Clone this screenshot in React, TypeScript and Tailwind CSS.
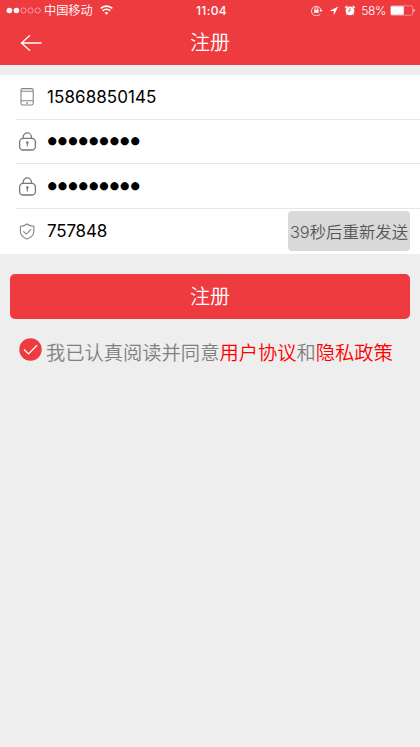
import { useState } from "react";
import type { ReactNode } from "react";

function StatusBar() {
  return (
    <div className="grid h-[21px] grid-cols-[1fr_auto_1fr] items-center pl-[6px] pr-[5px] text-[12px] leading-5">
      <div className="flex items-center">
        <svg className="h-[8px] w-[35px]" viewBox="0 0 35 8" fill="none" stroke="white">
          <circle cx="3.4" cy="3.5" r="2.8" fill="white" stroke="none" />
          <circle cx="10.4" cy="3.5" r="2.8" fill="white" stroke="none" />
          <circle cx="17.5" cy="3.5" r="2.6" strokeWidth=".6" strokeOpacity=".8" />
          <circle cx="24.6" cy="3.5" r="2.6" strokeWidth=".6" strokeOpacity=".8" />
          <circle cx="31.7" cy="3.5" r="2.6" strokeWidth=".6" strokeOpacity=".8" />
        </svg>
        <span className="ml-[3px] pt-px text-[12.2px] font-[350]">中国移动</span>
        <svg className="mb-px ml-[7px] h-[10px] w-[13px]" viewBox="0 0 13 10" fill="none">
          <path d="M.7 3.4a8.4 8.4 0 0 1 11.6 0" stroke="white" strokeWidth="1.6" />
          <path d="M2.7 5.9a5.4 5.4 0 0 1 7.6 0" stroke="white" strokeWidth="1.5" />
          <path d="M4.6 7.8a2.8 2.8 0 0 1 3.8 0L6.5 9.7Z" fill="white" />
        </svg>
      </div>
      <span className="pl-[2px] text-[12px] font-medium tracking-[0.4px]">11:04</span>
      <div className="flex items-center justify-end">
        <svg className="h-[11px] w-[12px]" viewBox="0 0 12 11" fill="none" stroke="white">
          <path d="M9.2 8.9A4.8 4.8 0 1 1 10 5" strokeWidth="0.8" />
          <path d="M8.5 5h3L10 7Z" fill="white" stroke="none" />
          <path d="M3.9 5V4a1.5 1.5 0 0 1 3 0v1" strokeWidth="0.8" />
          <path d="M3.2 4.8h4.4v3H3.2z" fill="white" stroke="none" />
        </svg>
        <svg className="ml-[6px] h-[10px] w-[10px]" viewBox="0 0 10 10">
          <path d="M9.3.6.5 4.9h4.3v4.4Z" fill="white" />
        </svg>
        <svg className="ml-[5px] h-[11px] w-[12px]" viewBox="0 0 12 11">
          <circle cx="6" cy="5.9" r="4.4" fill="white" />
          <path d="M1.2 2.9 3.2 1M10.8 2.9 8.8 1" stroke="white" strokeWidth="1.4" />
          <path d="m2.9 9.2-.7 1M9.1 9.2l.7 1" stroke="white" strokeWidth="1" />
          <path d="M6 3v3.1H3.9" fill="none" stroke="#ee3b3f" strokeWidth="0.8" />
        </svg>
        <span className="ml-[5px] text-[12px] font-light tracking-[-0.3px]">58%</span>
        <svg className="ml-[4px] h-[11px] w-[25px]" viewBox="0 0 25 11" fill="none">
          <rect x=".6" y=".8" width="22" height="9.4" rx="1.4" stroke="white" strokeOpacity=".6" strokeWidth=".7" />
          <rect x="1" y="1.2" width="12.8" height="8.6" rx=".8" fill="white" />
          <path d="M23.5 3.8q1.1.3 1.1 1.7t-1.1 1.7Z" fill="white" />
        </svg>
      </div>
    </div>
  );
}

function PhoneIcon() {
  return (
    <svg className="h-[19px] w-[18px]" viewBox="0 0 18 19" fill="none" stroke="#858585" strokeWidth="1.1">
      <rect x="3" y="1.6" width="12.2" height="16.4" rx="1.6" />
      <path d="M3 4.2h12.2M3 13.8h12.2" />
      <circle cx="9.1" cy="15.9" r=".9" fill="#858585" stroke="none" />
    </svg>
  );
}

function LockIcon() {
  return (
    <svg className="h-[19px] w-[18px]" viewBox="0 0 18 19" fill="none" stroke="#777" strokeWidth="1.3">
      <rect x="1.6" y="6.4" width="15.8" height="11.6" rx="3.6" />
      <path d="M5.2 6.2V5a4.1 4.1 0 0 1 8.2 0v1.2" />
      <circle cx="9.3" cy="10.5" r="1.3" fill="#777" stroke="none" />
      <path d="M9.3 10.6v4" strokeWidth="1.1" />
    </svg>
  );
}

function ShieldIcon() {
  return (
    <svg className="h-[19px] w-[18px]" viewBox="0 0 18 19" fill="none" stroke="#858585" strokeWidth="1.1">
      <path d="M9.1 2c2 1.5 4.2 2.1 6.7 2.2v5.2c0 3.5-2.5 6-6.7 7.5-4.2-1.5-6.7-4-6.7-7.5V4.2C4.9 4.1 7.1 3.5 9.1 2Z" />
      <path d="m5.3 9.3 3 2.8 4.9-5" />
    </svg>
  );
}

type FieldProps = {
  icon: ReactNode;
  last?: boolean;
  children: ReactNode;
};

function Field({ icon, last, children }: FieldProps) {
  return (
    <div
      className={`ml-4 flex h-[44.67px] items-center pl-[2px] ${
        last ? "" : "border-b border-[#e6e6e6]"
      }`}
    >
      {icon}
      {children}
    </div>
  );
}

function Masked({ value }: { value: string }) {
  return (
    <span className="ml-[11.5px] font-['DejaVu_Sans'] text-[10.8px] leading-none tracking-[0.95px]">
      {"●".repeat(value.length)}
    </span>
  );
}

export default function App() {
  const [agreed, setAgreed] = useState(true);

  return (
    <div className="min-h-screen bg-[#eeeeee] font-[Inter,'Noto_Sans_CJK_SC',sans-serif] text-black">
      <header className="h-[65px] bg-[#ee3b3f] text-white">
        <StatusBar />
        <div className="grid h-11 grid-cols-[1fr_auto_1fr] items-center">
          <button type="button" aria-label="返回" className="ml-5 w-[22px]">
            <svg className="h-[18px] w-[22px]" viewBox="0 0 22 18" fill="none" stroke="white" strokeWidth="1.3">
              <path d="M10 1.3 1.5 9l8.5 7.7M1.5 9h20" />
            </svg>
          </button>
          <h1 className="text-[20px] font-[350]">注册</h1>
        </div>
      </header>

      <section className="mt-[10px] bg-white">
        <Field icon={<PhoneIcon />}>
          <span className="ml-[11px] pt-px text-[17px] tracking-[0.08px]">15868850145</span>
        </Field>
        <Field icon={<LockIcon />}>
          <Masked value="123456789" />
        </Field>
        <Field icon={<LockIcon />}>
          <Masked value="123456789" />
        </Field>
        <Field icon={<ShieldIcon />} last>
          <span className="ml-[11px] text-[17px] tracking-[-0.2px]">757848</span>
          <button
            type="button"
            disabled
            className="ml-auto mr-[10px] h-10 w-[122px] whitespace-nowrap rounded bg-[#d9d9d9] pt-[2px] text-[16.4px] font-[350] text-[#555]"
          >
            39秒后重新发送
          </button>
        </Field>
      </section>

      <div className="px-[10px] pt-5">
        <button
          type="button"
          className="block h-[45px] w-full rounded-[5px] bg-[#ee3b3f] pt-[2px] text-[20px] font-[350] text-white"
        >
          注册
        </button>
      </div>

      <div className="flex items-center pl-[19px] pt-[19px]">
        <button type="button" aria-pressed={agreed} onClick={() => setAgreed(!agreed)} className="mb-[7px]">
          <svg className="size-[23px]" viewBox="0 0 23 23" fill="none">
            <circle cx="11.5" cy="11.5" r="11.2" fill={agreed ? "#ee3b3f" : "#c8c8c8"} />
            <path d="m5 11.5 4.6 4.4 8.4-8.6" stroke="white" strokeWidth="1.3" />
          </svg>
        </button>
        <p className="ml-1 whitespace-nowrap pt-px text-[19.27px] font-[350] text-[#808080]">
          我已认真阅读并同意<span className="text-[#ff0000]">用户协议</span>和
          <span className="text-[#ff0000]">隐私政策</span>
        </p>
      </div>
    </div>
  );
}
